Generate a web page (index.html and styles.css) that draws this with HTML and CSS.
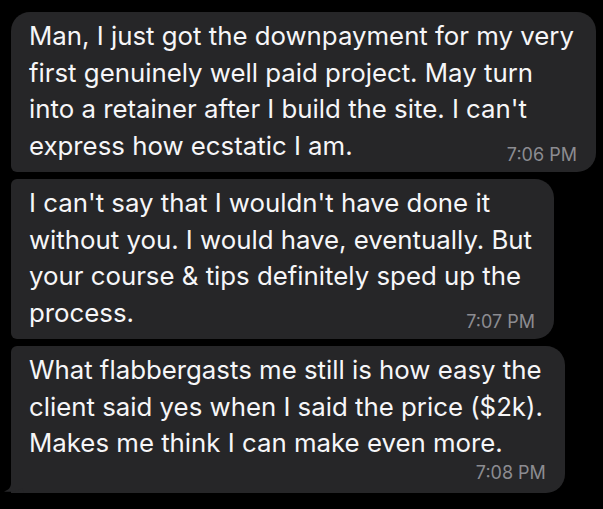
FILE: index.html
```html
<!DOCTYPE html>
<html lang="en">
<head>
    <meta charset="UTF-8">
    <meta name="viewport" content="width=device-width, initial-scale=1.0">
    <title>Messages</title>
    <link rel="stylesheet" href="styles.css">
</head>
<body>

    <div class="chat">
        <div class="bubble first">
            <div class="line">Man, I just got the downpayment for my very</div>
            <div class="line">first genuinely well paid project. May turn</div>
            <div class="line">into a retainer after I build the site. I can't</div>
            <div class="last-row">
                <span class="line">express how ecstatic I am.</span>
                <span class="time">7:06 PM</span>
            </div>
        </div>

        <div class="bubble">
            <div class="line">I can't say that I wouldn't have done it</div>
            <div class="line">without you. I would have, eventually. But</div>
            <div class="line">your course &amp; tips definitely sped up the</div>
            <div class="last-row">
                <span class="line">process.</span>
                <span class="time">7:07 PM</span>
            </div>
        </div>

        <div class="bubble last">
            <div class="line">What flabbergasts me still is how easy the</div>
            <div class="line">client said yes when I said the price ($2k).</div>
            <div class="line">Makes me think I can make even more.</div>
            <div class="last-row">
                <span class="time">7:08 PM</span>
            </div>
            <svg class="tail" width="20" height="22" viewBox="0 0 20 22">
                <path d="M7 0 L7 12 C7 16 5 19 0 20.5 C5 21.5 13 20.5 18 17 L20 22 L20 0 Z" fill="#262628"/>
            </svg>
        </div>
    </div>

</body>
</html>
```

FILE: styles.css
```css
body {
    margin: 0;
    padding: 0;
    background-color: #000;
    font-family: Inter, "Noto Sans", sans-serif;
}

/* Lista de mensagens */
.chat {
    display: flex;
    flex-direction: column;
    align-items: flex-start;
    gap: 7px;
    padding: 12px 6px 0 11px;
}

.bubble {
    position: relative;
    background-color: #262628;
    color: #f6f6f8;
    font-size: 25.8px;
    line-height: 36.5px;
    padding: 6px 22px 8px 18px;
    border-radius: 6px 19px 19px 6px;
}

.bubble.first {
    border-top-left-radius: 19px;
}

.bubble.last {
    border-bottom-left-radius: 0;
    padding-bottom: 11px;
}

.line {
    white-space: nowrap;
}

.last-row {
    display: flex;
    justify-content: space-between;
    align-items: flex-end;
    gap: 20px;
}

.time {
    margin-left: auto;
    margin-right: -3px;
    color: #8c8c91;
    font-size: 18px;
    line-height: 22px;
    margin-bottom: -2px;
}

/* Rabinho do último balão */
.tail {
    position: absolute;
    left: -7px;
    bottom: 0;
}
```
